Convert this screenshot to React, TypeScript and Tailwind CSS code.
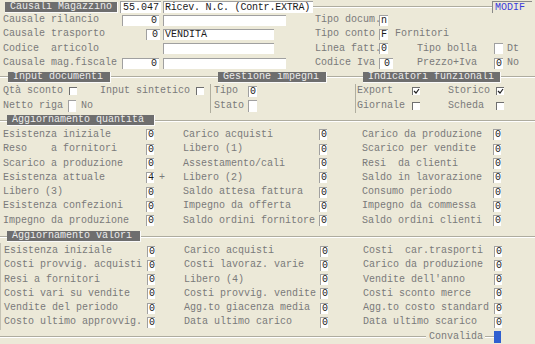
import React, { ReactNode } from "react";

const Bar: React.FC<{ w: string; children: ReactNode }> = ({ w, children }) => (
  <div
    className={`${w} shrink-0 h-[11px] bg-[#6e6e6e] text-[#ececec] border-r border-b border-[#fafafa] flex items-center pl-[5px] whitespace-pre`}
  >
    {children}
  </div>
);

const Line: React.FC<{ w?: string }> = ({ w = "flex-1" }) => (
  <div className={`${w} shrink-0 border-t border-[#aeac9f] border-b border-b-white h-0`} />
);

const Box: React.FC<{ w: string; children?: ReactNode; right?: boolean; h?: string }> = ({
  w,
  children,
  right,
  h = "h-[11px]",
}) => (
  <div
    className={`${w} ${h} shrink-0 bg-white border-t border-l border-[#a0a0a0] text-[#1a1a1a] flex items-center whitespace-pre overflow-hidden ${
      right ? "justify-end pr-[2px]" : "pl-[1px]"
    }`}
  >
    {children}
  </div>
);

const Lbl: React.FC<{ w?: string; children: ReactNode }> = ({ w = "", children }) => (
  <div className={`${w} shrink-0 whitespace-pre text-[#7a7a7a]`}>{children}</div>
);

const Gap: React.FC<{ w: string; children?: ReactNode }> = ({ w, children }) => (
  <div className={`${w} shrink-0 whitespace-pre text-[#7a7a7a]`}>{children}</div>
);

const Check: React.FC<{ on?: boolean }> = ({ on }) => (
  <div className="w-[8px] h-[8px] shrink-0 bg-white border-t border-l border-[#6f6f6f] relative">
    {on && (
      <svg viewBox="0 0 7 7" className="absolute left-0 top-0 w-[7px] h-[7px]">
        <path d="M1 3 L3 5 L6 1" stroke="#222" strokeWidth="1.2" fill="none" />
      </svg>
    )}
  </div>
);

const Row: React.FC<{ children: ReactNode; cls?: string }> = ({ children, cls = "" }) => (
  <div className={`flex items-center h-[14.3px] ${cls}`}>{children}</div>
);

type Triple = [string, string, string, string, string, string];

const QtyRows: Triple[] = [
  ["Esistenza iniziale", "0", "Carico acquisti", "0", "Carico da produzione", "0"],
  ["Reso    a fornitori", "0", "Libero (1)", "0", "Scarico per vendite", "0"],
  ["Scarico a produzione", "0", "Assestamento/cali", "0", "Resi  da clienti", "0"],
  ["Esistenza attuale", "4", "Libero (2)", "0", "Saldo in lavorazione", "0"],
  ["Libero (3)", "0", "Saldo attesa fattura", "0", "Consumo periodo", "0"],
  ["Esistenza confezioni", "0", "Impegno da offerta", "0", "Impegno da commessa", "0"],
  ["Impegno da produzione", "0", "Saldo ordini fornitore", "0", "Saldo ordini clienti", "0"],
];

const ValRows: Triple[] = [
  ["Esistenza iniziale", "0", "Carico acquisti", "0", "Costi  car.trasporti", "0"],
  ["Costi provvig. acquisti", "0", "Costi lavoraz. varie", "0", "Carico da produzione", "0"],
  ["Resi a fornitori", "0", "Libero (4)", "0", "Vendite dell'anno", "0"],
  ["Costi vari su vendite", "0", "Costi provvig. vendite", "0", "Costi sconto merce", "0"],
  ["Vendite del periodo", "0", "Agg.to giacenza media", "0", "Agg.to costo standard", "0"],
  ["Costo ultimo approvvig.", "0", "Data ultimo carico", "0", "Data ultimo scarico", "0"],
];

const Grid: React.FC<{ rows: Triple[]; plus?: number }> = ({ rows, plus }) => (
  <>
    {rows.map((r, i) => (
      <Row key={i} cls="pl-[3px]">
        <Lbl w="w-[143px]">{r[0]}</Lbl>
        <Box w="w-[8px]">{r[1]}</Box>
        <Gap w="w-[29px] pl-[5px]">{plus === i ? "+" : ""}</Gap>
        <Lbl w="w-[136px]">{r[2]}</Lbl>
        <Box w="w-[8px]">{r[3]}</Box>
        <Gap w="w-[35px]" />
        <Lbl w="w-[131px]">{r[4]}</Lbl>
        <Box w="w-[8px]">{r[5]}</Box>
      </Row>
    ))}
  </>
);

export default function App() {
  return (
    <div
      className="w-[535px] h-[344px] overflow-hidden bg-[#ece9d8] text-[10px] leading-none flex flex-col"
      style={{ fontFamily: '"Liberation Mono", "Courier New", monospace' }}
    >
      {/* testata */}
      <div className="flex items-center h-[13px] pt-[1px]">
        <Gap w="w-[5px]" />
        <Bar w="w-[113px]">Causali Magazzino</Bar>
        <Gap w="w-[2px]" />
        <Box w="w-[41px]" h="h-[12px]">
          <span className="pl-[1px]">55.047</span>
        </Box>
        <Gap w="w-[2px]" />
        <Box w="w-[150px]" h="h-[12px]">
          <span className="tracking-[-0.2px]">Ricev. N.C. (Contr.EXTRA)</span>
        </Box>
        <Line />
        <div className="w-[40px] h-[12px] shrink-0 border-l border-t border-[#8a8a8a] text-[#3b3bdc] flex items-center pl-[2px] mr-[3px]">
          MODIF
        </div>
      </div>

      <Row cls="pl-[3px]">
        <Lbl w="w-[119px]">Causale rilancio</Lbl>
        <Box w="w-[37px]" right>0</Box>
        <Gap w="w-[4px]" />
        <Box w="w-[123px]" />
        <Gap w="w-[29px]" />
        <Lbl w="w-[64px]">Tipo docum.</Lbl>
        <Box w="w-[9px]">n</Box>
      </Row>
      <Row cls="pl-[3px]">
        <Lbl w="w-[143px]">Causale trasporto</Lbl>
        <Box w="w-[14px]" right>0</Box>
        <Gap w="w-[3px]" />
        <Box w="w-[111px]">VENDITA</Box>
        <Gap w="w-[41px]" />
        <Lbl w="w-[64px]">Tipo conto</Lbl>
        <Box w="w-[9px]">F</Box>
        <Gap w="w-[7px]" />
        <Lbl>Fornitori</Lbl>
      </Row>
      <Row cls="pl-[3px]">
        <Lbl w="w-[160px]">Codice  articolo</Lbl>
        <Box w="w-[111px]" />
        <Gap w="w-[41px]" />
        <Lbl w="w-[64px]">Linea fatt.</Lbl>
        <Box w="w-[9px]">0</Box>
        <Gap w="w-[29px]" />
        <Lbl w="w-[77px]">Tipo bolla</Lbl>
        <Box w="w-[9px]" />
        <Gap w="w-[4px]" />
        <Lbl>Dt</Lbl>
      </Row>
      <Row cls="pl-[3px]">
        <Lbl w="w-[119px]">Causale mag.fiscale</Lbl>
        <Box w="w-[37px]" right>0</Box>
        <Gap w="w-[4px]" />
        <Box w="w-[123px]" />
        <Gap w="w-[29px]" />
        <Lbl w="w-[64px]">Codice Iva</Lbl>
        <Box w="w-[14px] justify-center">0</Box>
        <Gap w="w-[24px]" />
        <Lbl w="w-[77px]">Prezzo+Iva</Lbl>
        <Box w="w-[9px]">0</Box>
        <Gap w="w-[4px]" />
        <Lbl>No</Lbl>
      </Row>

      {/* input / impegni / indicatori */}
      <div className="flex mt-[1px]">
        <div className="w-[210px] shrink-0 flex flex-col">
          <div className="flex items-center h-[12px]">
            <Line w="w-[8px]" />
            <Bar w="w-[103px]">Input documenti</Bar>
            <Line />
          </div>
          <Row cls="pl-[3px] mt-[1px]">
            <Lbl w="w-[66px]">Qtà sconto</Lbl>
            <Check />
            <Gap w="w-[23px]" />
            <Lbl w="w-[96px]">Input sintetico</Lbl>
            <Check />
          </Row>
          <Row cls="pl-[3px]">
            <Lbl w="w-[65px]">Netto riga</Lbl>
            <Box w="w-[8px]" h="h-[12px]" />
            <Gap w="w-[5px]" />
            <Lbl>No</Lbl>
          </Row>
        </div>
        <div className="w-[145px] shrink-0 flex flex-col">
          <div className="flex items-center h-[12px]">
            <Line w="w-[8px]" />
            <Bar w="w-[109px]">Gestione impegni</Bar>
            <Line />
          </div>
          <div className="border-l border-[#b0ae9f] mt-[1px]">
            <Row cls="pl-[3px]">
              <Lbl w="w-[34px]">Tipo</Lbl>
              <Box w="w-[9px]">0</Box>
            </Row>
            <Row cls="pl-[3px]">
              <Lbl w="w-[34px]">Stato</Lbl>
              <Box w="w-[9px]" h="h-[12px]" />
            </Row>
          </div>
        </div>
        <div className="flex-1 flex flex-col">
          <div className="flex items-center h-[12px]">
            <Line w="w-[8px]" />
            <Bar w="w-[138px]">Indicatori funzionali</Bar>
            <Line />
          </div>
          <div className="border-l border-[#b0ae9f] mt-[1px]">
            <Row cls="pl-[1px]">
              <Lbl w="w-[55px]">Export</Lbl>
              <Check on />
              <Gap w="w-[28px]" />
              <Lbl w="w-[48px]">Storico</Lbl>
              <Check on />
            </Row>
            <Row cls="pl-[1px]">
              <Lbl w="w-[55px]">Giornale</Lbl>
              <Check />
              <Gap w="w-[28px]" />
              <Lbl w="w-[48px]">Scheda</Lbl>
              <Check />
            </Row>
          </div>
        </div>
      </div>

      {/* quantità */}
      <div className="flex items-center h-[12px] mt-[2px]">
        <Line w="w-[7px]" />
        <Bar w="w-[148px]">Aggiornamento quantità</Bar>
        <Line />
      </div>
      <div className="pt-[1px]">
        <Grid rows={QtyRows} plus={3} />
      </div>

      {/* valori */}
      <div className="flex items-center h-[12px] mt-[3px]">
        <Line w="w-[7px]" />
        <Bar w="w-[134px]">Aggiornamento valori</Bar>
        <Line />
      </div>
      <div className="pt-[1px] border-l border-[#c4c2b4]">
        <Grid rows={ValRows} />
      </div>

      <div className="flex items-center h-[12px] mt-[1px]">
        <Line w="w-[426px]" />
        <Gap w="w-[59px] pl-[3px]">Convalida</Gap>
        <Line w="w-[9px]" />
        <div className="w-[7px] h-[12px] shrink-0 bg-[#2f5fd0]" />
      </div>
    </div>
  );
}
